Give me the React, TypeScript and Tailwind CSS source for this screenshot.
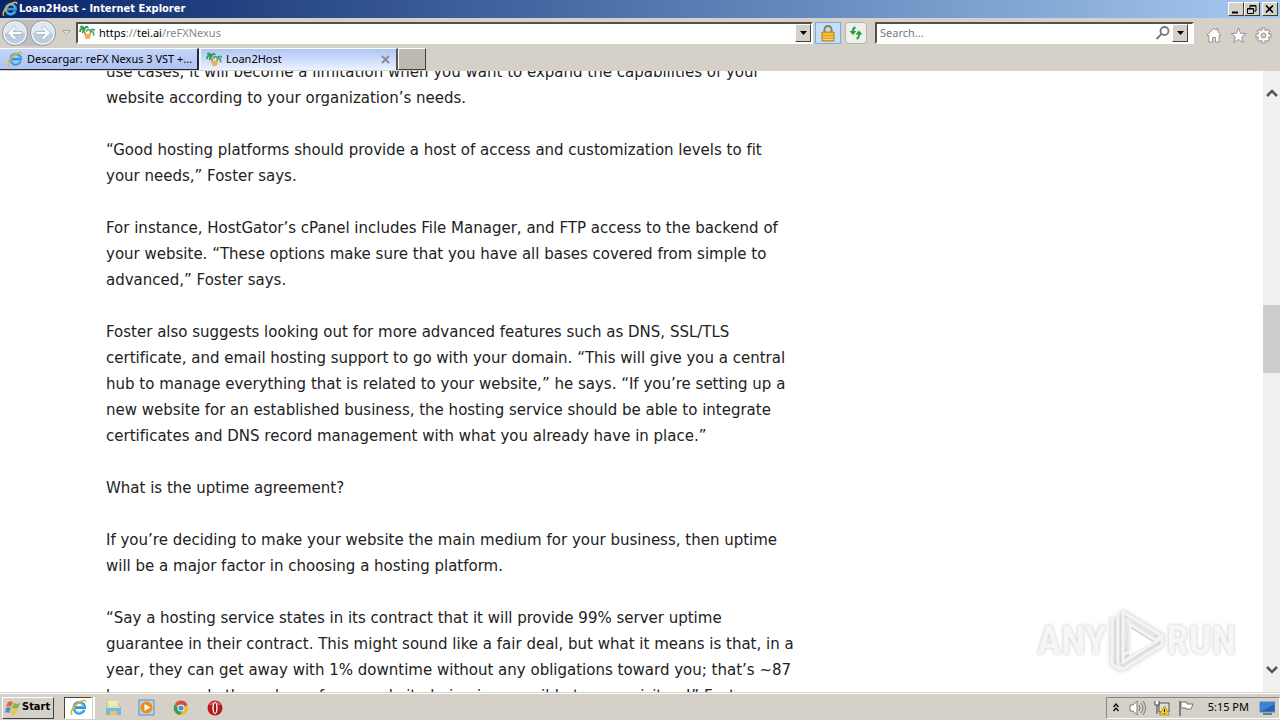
import type { ReactNode } from "react";

const paragraphs = [
  ["use cases, it will become a limitation when you want to expand the capabilities of your", "website according to your organization’s needs."],
  ["“Good hosting platforms should provide a host of access and customization levels to fit", "your needs,” Foster says."],
  ["For instance, HostGator’s cPanel includes File Manager, and FTP access to the backend of", "your website. “These options make sure that you have all bases covered from simple to", "advanced,” Foster says."],
  ["Foster also suggests looking out for more advanced features such as DNS, SSL/TLS", "certificate, and email hosting support to go with your domain. “This will give you a central", "hub to manage everything that is related to your website,” he says. “If you’re setting up a", "new website for an established business, the hosting service should be able to integrate", "certificates and DNS record management with what you already have in place.”"],
  ["What is the uptime agreement?"],
  ["If you’re deciding to make your website the main medium for your business, then uptime", "will be a major factor in choosing a hosting platform."],
  ["“Say a hosting service states in its contract that it will provide 99% server uptime", "guarantee in their contract. This might sound like a fair deal, but what it means is that, in a", "year, they can get away with 1% downtime without any obligations toward you; that’s ~87", "hours or nearly three days of your website being inaccessible to your visitors!” Foster"],
];

const raised = "border border-t-white border-l-white border-r-[#404040] border-b-[#404040] bg-[#d5d0c8]";
const sunken = "border-2 border-t-[#55504c] border-l-[#55504c] border-r-white border-b-white bg-white";

function IeLogo({ size }: { size: number }) {
  return (
    <svg width={size} height={size} viewBox="0 0 16 16" fill="none" className="shrink-0">
      <path d="M13.4 10.3a5.1 5.1 0 1 1 .4-2.2H4.2" stroke="#2f96dc" strokeWidth="2.6" />
      <path d="M12.8 9.8a4.6 4.6 0 1 1 .3-2.2" stroke="#8bd2f8" strokeWidth=".9" />
      <path d="M2.2 14.6C-.4 13.8 2 8.2 6.6 4.4c3.7-3.1 8.2-4.3 8.2-1.5" stroke="#e9b61e" strokeWidth="1.5" />
    </svg>
  );
}

function PalmIcon() {
  return (
    <svg width="16" height="16" viewBox="0 0 16 16" fill="none" className="shrink-0">
      <path d="M5.5 4.5C4.500 1 2 1 1.500 2.500M5.500 4.500C3 2.500 1 4 1 7m4.500-2.500C6 1.500 8 1 9 3M5.500 4.500C4 5 3.500 7 4 8" stroke="#249b55" strokeWidth="1.8" />
      <path d="M11.500 6.500c-1-3-3.500-2.500-4 0m4 0c.5-3 4-3 4-.5m-4 .5c2.500-.5 3.500 1.500 3 4" stroke="#39a861" strokeWidth="1.6" />
      <path d="M5.500 5c0 3 1 6 3 8m3-6.500c0 3-1 5-2.500 6.500" stroke="#c98c35" strokeWidth="1.500" />
      <circle cx="8.6" cy="11.500" r="2.800" fill="#efb447" />
    </svg>
  );
}

function NavArrow({ label, flip }: { label: string; flip?: boolean }) {
  return (
    <button aria-label={label} className="h-[26px] w-[26px] shrink-0">
      <svg width="26" height="26" viewBox="0 0 26 26" className={flip ? "-scale-x-100" : ""}>
        <circle cx="13" cy="13" r="12.5" fill="#f4f6f8" stroke="#8d98a5" />
        <circle cx="13" cy="13" r="10.5" fill="#bccde0" />
        <path d="M2.500 13a10.500 10.500 0 0 1 21 0z" fill="#dfe7f0" />
        <path d="M12.500 6 5.500 13l7 7 2-2-3.500-3.500h9v-3h-9L14.500 8z" fill="#fff" stroke="#9dafc3" strokeWidth=".8" />
      </svg>
    </button>
  );
}

function DropButton({ label }: { label: string }) {
  return (
    <button aria-label={label} className={`flex h-[18px] w-4 shrink-0 items-center justify-center ${raised}`}>
      <svg width="7" height="4" viewBox="0 0 7 4"><path d="M0 0h7L3.500 4z" fill="#000" /></svg>
    </button>
  );
}

function WindowButton({ label, children }: { label: string; children: ReactNode }) {
  return (
    <button aria-label={label} className={`flex h-[14px] w-4 items-center justify-center ${raised}`}>
      <svg width="12" height="11" viewBox="0 0 12 11" fill="none" stroke="#000">{children}</svg>
    </button>
  );
}

function TitleBar() {
  return (
    <header className="flex h-[18px] shrink-0 items-center bg-linear-to-r from-[#0a246a] to-[#a6caf0] px-0.5">
      <IeLogo size={16} />
      <h1 className="ml-px flex-1 font-['DejaVu_Sans_Condensed','DejaVu_Sans',sans-serif] text-[11px] font-bold text-white">Loan2Host - Internet Explorer</h1>
      <div className="flex">
        <WindowButton label="Minimize"><path d="M2 8.5h6" strokeWidth="2" /></WindowButton>
        <WindowButton label="Restore"><path d="M4 4V1.500h6V7H8M4 2h6M1.500 4.500h6v5h-6zM1.500 5h6" /></WindowButton>
        <span className="w-0.5" />
        <WindowButton label="Close"><path d="m2 1.500 7 7m0-7-7 7" strokeWidth="1.600" /></WindowButton>
      </div>
    </header>
  );
}

function Toolbar() {
  return (
    <div className="flex h-[30px] shrink-0 items-center px-0.5">
      <div className="flex gap-0.5 rounded-full bg-[#bfbfbf]">
        <NavArrow label="Back" />
        <NavArrow label="Forward" flip />
      </div>
      <button aria-label="Recent pages" className="flex w-5 justify-center">
        <svg width="9" height="6" viewBox="0 0 9 6"><path d="M.5.5h8l-4 4z" fill="#e6e2dc" stroke="#aaa69f" /></svg>
      </button>
      <div className={`flex h-[22px] min-w-0 flex-1 items-center pl-px ${sunken}`}>
        <PalmIcon />
        <div role="textbox" aria-label="Address" className="ml-1 flex-1 text-[11px] text-[#888]">
          <span className="text-black">https</span>://<span className="text-black">tei.ai</span>/reFXNexus
        </div>
        <DropButton label="Show address list" />
      </div>
      <button aria-label="Security report" className="ml-0.5 flex h-[22px] w-[26px] items-center justify-center border border-[#78aee5] bg-[#c6def8]">
        <svg width="14" height="17" viewBox="0 0 14 17">
          <path d="M3.500 8V4.500a3.500 3.500 0 0 1 7 0V8" fill="none" stroke="#8d8052" strokeWidth="2" />
          <path d="M1 7h12v9H1z" fill="#e5a51f" stroke="#b88425" />
          <path d="M2 9h10M2 12h10M2 14.500h10" stroke="#f8d66c" />
        </svg>
      </button>
      <button aria-label="Refresh" className="mx-1 flex h-[22px] w-[22px] items-center justify-center rounded-sm border border-[#b6b6b6] bg-[#edf1ec]">
        <svg width="14" height="14" viewBox="0 0 14 14" fill="none">
          <path d="M6.500 1.500C4.500 1.500 4 3 4 5M7.500 12.500c2 0 2.500-1.500 2.500-4.500" stroke="#2c9837" strokeWidth="2" />
          <path d="M.5 5h7L4 9zM6.500 8.500h7L10 4.500z" fill="#2c9837" />
        </svg>
      </button>
      <div className={`ml-1 flex h-[22px] w-1/4 items-center ${sunken}`}>
        <input aria-label="Search" placeholder="Search..." className="min-w-0 flex-1 px-[3px] text-[11px] outline-none placeholder:text-[#777]" />
        <button aria-label="Run search" className="mr-0.5">
          <svg width="14" height="14" viewBox="0 0 14 14" fill="none" stroke="#777" strokeWidth="1.800"><circle cx="8.500" cy="5" r="4" /><path d="m5.500 8-5 5" /></svg>
        </button>
        <DropButton label="Search options" />
        <span className="w-1" />
      </div>
      <div className="ml-3 flex gap-2 pt-1 pr-1.5">
        <button aria-label="Home">
          <svg width="16" height="16" viewBox="0 0 17 17"><path d="m1 8.500 7.500-7 2.500 2V2h2v3.500l3 3-1 1-1-1V16h-4v-5H7v5H3V8.500l-1 1z" fill="#fff" stroke="#929292" /></svg>
        </button>
        <button aria-label="Favorites">
          <svg width="17" height="17" viewBox="0 0 17 17"><path d="m8.500 1 2 5.200 5.500.3-4.300 3.500 1.500 5.500-4.700-3-4.700 3L5.300 10 1 6.500l5.500-.3z" fill="#fff" stroke="#929292" /></svg>
        </button>
        <button aria-label="Tools">
          <svg width="17" height="17" viewBox="0 0 17 17" fill="none">
            <path d="M8.500.5v16M.5 8.500h16M3 3l11 11m0-11L3 14" stroke="#929292" strokeWidth="3.800" />
            <circle cx="8.500" cy="8.500" r="5.500" fill="#fff" stroke="#929292" />
            <path d="M8.500 1.500v14M1.500 8.500h14M3.700 3.700l9.600 9.600m0-9.600-9.600 9.600" stroke="#fff" strokeWidth="2" />
            <circle cx="8.500" cy="8.500" r="2.500" fill="#d5d0c8" stroke="#929292" />
          </svg>
        </button>
      </div>
    </div>
  );
}

function TabBar() {
  return (
    <nav role="tablist" className="flex h-[23px] shrink-0 pb-px text-[11px] text-black">
      <button role="tab" aria-selected="false" className="flex w-[199px] items-center gap-1 border-t border-r-2 border-b border-t-white border-r-[#24283a] border-b-[#24283a] bg-linear-to-b from-[#c5d5fa] to-[#afc4f1] pl-[7px]">
        <IeLogo size={16} />
        <span className="truncate">Descargar: reFX Nexus 3 VST +...</span>
      </button>
      <div className="flex w-[199px] items-center border-t border-r-2 border-l-2 border-t-white border-r-[#555] border-l-[#edf3ff] bg-linear-to-b from-[#aec5f5] to-[#edf3ff] pr-1.5 pl-[5px]">
        <button role="tab" aria-selected="true" className="flex flex-1 items-center gap-1"><PalmIcon />Loan2Host</button>
        <button aria-label="Close tab">
          <svg width="9" height="9" viewBox="0 0 9 9"><path d="m1 1 7 7m0-7L1 8" stroke="#85899a" strokeWidth="1.800" /></svg>
        </button>
      </div>
      <button aria-label="New tab" className="w-7 border border-t-white border-l-white border-r-[#404040] border-b-[#404040] bg-[#bdb8b0]" />
    </nav>
  );
}

function Watermark() {
  return (
    <div className="absolute right-11 bottom-4 flex h-[70px] items-center gap-0.5 font-['Liberation_Sans_Narrow','Roboto_Condensed',sans-serif] text-[40px] leading-none font-bold text-[#f6f6f6] [text-shadow:0_0_3px_#bdbdbd]">
      <span>ANY</span>
      <svg width="56" height="64" viewBox="0 0 56 64" fill="none" className="drop-shadow-[0_0_2px_#bbb]">
        <path d="M20 18v29l24-14z" fill="#fff" />
        <path d="M14 3v43l7-4V15l25 16 7-4L14 3zM9 6v51l5 3 39-24v-7L14 53V12M3 9v46l9 6" stroke="#f4f4f4" strokeWidth="3" />
      </svg>
      <span>RUN</span>
    </div>
  );
}

function ScrollBar() {
  return (
    <div className="flex w-[17px] shrink-0 flex-col items-center bg-[#f0f0f0]">
      <button aria-label="Scroll up" className="flex h-11 items-center">
        <svg width="12" height="8" viewBox="0 0 12 8" fill="none" stroke="#555" strokeWidth="2.500"><path d="m1 7 5-5 5 5" /></svg>
      </button>
      <div className="w-full flex-[190]" />
      <div className="w-full flex-[68] bg-[#cdcdcd]" />
      <div className="w-full flex-[275]" />
      <button aria-label="Scroll down" className="flex h-11 items-center">
        <svg width="12" height="8" viewBox="0 0 12 8" fill="none" stroke="#555" strokeWidth="2.500"><path d="m1 1 5 5 5-5" /></svg>
      </button>
    </div>
  );
}

function TaskBar() {
  return (
    <footer className="flex h-7 shrink-0 items-center border-t border-[#d5d0c8] bg-[#d5d0c8] pl-0.5 text-[11px] text-black shadow-[inset_0_1px_0_#fff]">
      <button className={`mt-0.5 flex h-[22px] w-[52px] items-center gap-px pl-0.5 font-['DejaVu_Sans_Condensed','DejaVu_Sans',sans-serif] font-bold ${raised}`}>
        <svg width="16" height="16" viewBox="0 0 16 16" className="shrink-0">
          <path d="M3 2c2-1 3-1 5 0L6 7C4 6 3 6 1 7z" fill="#e66a31" />
          <path d="M9 3c2 1 4 1 6 0l-2 5c-2 1-4 1-6 0z" fill="#81b84a" />
          <path d="M1 8c2-1 3-1 5 0l-2 5c-2-1-3-1-4 0z" fill="#4d8ed0" />
          <path d="M7 9c2 1 4 1 6 0l-2 5c-2 1-4 1-6 0z" fill="#efc443" />
        </svg>
        Start
      </button>
      <div className="mt-0.5 ml-2.5 flex items-center">
        <button aria-label="Internet Explorer" className="flex h-[22px] w-7 items-center justify-center border border-t-[#444] border-l-[#444] border-r-white border-b-white bg-white"><IeLogo size={17} /></button>
        <span className="ml-px h-[22px] w-0.5 bg-white" />
        <button aria-label="Windows Explorer" className="ml-2.5">
          <svg width="17" height="17" viewBox="0 0 17 17"><path d="M1 3h6l2 2h6v11H1z" fill="#e8c75e" /><path d="M3 2h10v5H3z" fill="#f8e9a8" /><path d="M1 8h15v8h-4v-4H5v4H1z" fill="#74bbd8" /><path d="M2 8h13" stroke="#c0e3eb" strokeWidth="2" /></svg>
        </button>
        <button aria-label="Media Player" className="ml-4">
          <svg width="17" height="17" viewBox="0 0 17 17"><path d="M1 1h15v15H1z" fill="#b8d6ec" stroke="#5791be" /><circle cx="8.500" cy="8.500" r="6" fill="#f18b19" /><path d="m6.500 5 6 3.500-6 3.500z" fill="#fff" /></svg>
        </button>
        <button aria-label="Chrome" className="ml-[18px]">
          <svg width="16" height="16" viewBox="0 0 16 16"><circle cx="8" cy="8" r="7" fill="#e6bd28" /><path d="M8 8 2 4a7 7 0 0 1 12.500 1z" fill="#d94b3d" /><path d="M2 4a7 7 0 0 0 5 11l3-5-4-1z" fill="#3c9c59" /><circle cx="8" cy="8" r="3.500" fill="#fff" /><circle cx="8" cy="8" r="2.600" fill="#4c89d8" /></svg>
        </button>
        <button aria-label="Opera" className="ml-[18px]">
          <svg width="16" height="16" viewBox="0 0 16 16"><circle cx="8" cy="8" r="7.500" fill="#b9181e" /><path d="M2 5a7 7 0 0 1 12 0z" fill="#e15a58" /><ellipse cx="8" cy="8" rx="2.600" ry="6" fill="#fff" /><ellipse cx="8" cy="8" rx="1.200" ry="5" fill="#9e1116" /></svg>
        </button>
      </div>
      <div className="mt-0.5 ml-auto flex h-[22px] w-[174px] items-center border border-t-[#888] border-l-[#888] border-r-white border-b-white pr-1 pl-1.5">
        <button aria-label="Show hidden icons"><svg width="6" height="9" viewBox="0 0 6 9" fill="none" stroke="#000" strokeWidth="1.300"><path d="m.5 4 2.500-3 2.500 3m-5 4L3 5l2.500 3" /></svg></button>
        <button aria-label="Volume" className="ml-2.5">
          <svg width="17" height="16" viewBox="0 0 17 16" fill="none" stroke="#777"><path d="M1 5h3l4-4v14l-4-4H1z" fill="#fff" /><path d="M10 5q2 3 0 6m2-8q4 5 0 10m2-12q5 7 0 14" /></svg>
        </button>
        <button aria-label="Network" className="ml-2">
          <svg width="16" height="16" viewBox="0 0 16 16"><path d="M5 3h10v9H5z" fill="#ddd" stroke="#555" /><path d="M1 1v4h4V1M3 5v9" fill="#fff" stroke="#444" /><path d="m10.500 6 5 9h-10z" fill="#f3cc2c" stroke="#c29b14" /><path d="M10.500 9v3m0 1v1" stroke="#222" /></svg>
        </button>
        <button aria-label="Action Center" className="ml-2">
          <svg width="17" height="16" viewBox="0 0 17 16"><path d="M2 1v15" stroke="#666" strokeWidth="1.500" /><path d="M3 2h6v2h6l-2 5H8V8H3z" fill="#fff" stroke="#777" /></svg>
        </button>
        <time className="ml-auto">5:15 PM</time>
        <button aria-label="Show desktop" className="ml-2.5">
          <svg width="16" height="14" viewBox="0 0 16 14"><path d="M1 1h15v10H1z" fill="#2563b8" stroke="#5888b8" /><path d="m1 11 15-8V1H1z" fill="#3d83d1" /><path d="M4 13h9" stroke="#687d91" strokeWidth="2" /></svg>
        </button>
      </div>
    </footer>
  );
}

export default function App() {
  return (
    <div className="flex h-screen flex-col overflow-hidden bg-[#d5d0c8] font-['Noto_Sans',sans-serif]">
      <TitleBar />
      <Toolbar />
      <TabBar />
      <div className="relative flex min-h-0 flex-1 bg-white">
        <main className="min-w-0 flex-1 overflow-hidden pl-[106px] font-['DejaVu_Sans',sans-serif] text-[15px] leading-[26px] text-[#222] [font-variant-ligatures:none]">
          <article className="-mt-3 flex flex-col gap-[26px]">
            {paragraphs.map((lines) => (
              <p key={lines[0]} className="whitespace-nowrap">
                {lines.map((line) => <span key={line} className="block">{line}</span>)}
              </p>
            ))}
          </article>
        </main>
        <Watermark />
        <ScrollBar />
      </div>
      <TaskBar />
    </div>
  );
}
